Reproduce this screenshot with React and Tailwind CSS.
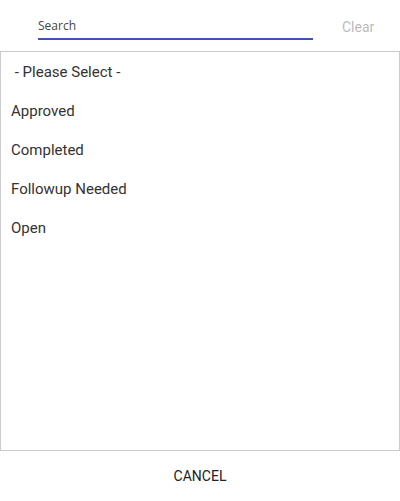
import React, { useState } from "react";

const options = [" - Please Select -", "Approved", "Completed", "Followup Needed", "Open"];

export default function App() {
  const [query, setQuery] = useState("");
  const shown = options.filter((o) => o.toLowerCase().includes(query.toLowerCase()));

  return (
    <div className="w-[400px] h-[501px] bg-white flex flex-col font-['Roboto',sans-serif]">
      {/* search header */}
      <div className="h-[51px] flex items-start shrink-0">
        <div className="ml-[38px] mt-[14px] w-[275px] border-b-2 border-[#3f51b5]">
          <input
            value={query}
            onChange={(e) => setQuery(e.target.value)}
            placeholder="Search"
            className="block w-full h-[24px] pb-[2px] text-[12px] leading-[19px] font-['Open_Sans',sans-serif] text-[#333] placeholder:text-[#444] outline-none bg-transparent"
          />
        </div>
        <button className="ml-[29px] mt-[17px] text-[14px] text-[#bbb]">Clear</button>
      </div>

      {/* option list */}
      <div className="h-[400px] border border-[#ccc] pt-[1px] overflow-auto shrink-0">
        {shown.map((o) => (
          <div key={o} className="h-[39px] flex items-center px-[10px] text-[15px] text-[#333] whitespace-pre cursor-pointer">
            {o}
          </div>
        ))}
      </div>

      {/* footer */}
      <div className="flex-1 flex items-center justify-center">
        <button className="text-[14px] text-[#222]">CANCEL</button>
      </div>
    </div>
  );
}
